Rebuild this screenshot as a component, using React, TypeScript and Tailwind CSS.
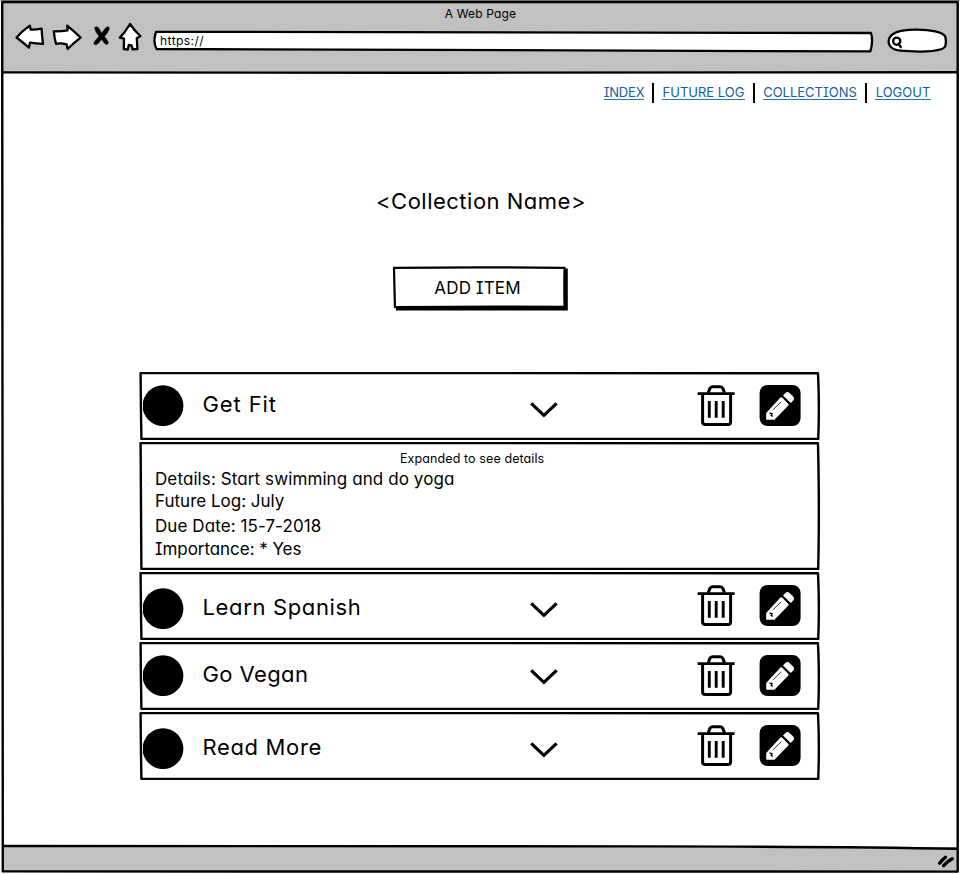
const ITEMS = [
  { title: 'Get Fit', tracking: 'tracking-[0.9px]', top: 'mt-[13px]', chevron: 'mt-[30px]', expanded: true },
  { title: 'Learn Spanish', tracking: 'tracking-[0.65px]', top: 'mt-4', chevron: 'mt-[30px]', expanded: false },
  { title: 'Go Vegan', tracking: 'tracking-[0.4px]', top: 'mt-[13px]', chevron: 'mt-[27px]', expanded: false },
  { title: 'Read More', tracking: 'tracking-[0.65px]', top: 'mt-4', chevron: 'mt-[30px]', expanded: false },
];

const DETAILS = [
  { text: 'Details: Start swimming and do yoga', style: 'h-[22px] tracking-[0.1px]' },
  { text: 'Future Log: July', style: 'h-[25px]' },
  { text: 'Due Date: 15-7-2018', style: 'h-[23px] tracking-[0.08px]' },
  { text: 'Importance: * Yes', style: 'h-6 tracking-[-0.05px]' },
];

const LINKS = [
  { label: 'INDEX', style: 'w-10 tracking-[-0.2px]' },
  { label: 'FUTURE LOG', style: 'w-[83px]' },
  { label: 'COLLECTIONS', style: 'w-[94px]' },
  { label: 'LOGOUT', style: 'w-14' },
];

function RowOutline({ height }: { height: number }) {
  const b = height - 1;
  return (
    <svg className="absolute inset-0" width="681" height={height} fill="none" stroke="#000" strokeWidth="2.4" strokeLinejoin="round">
      <path d={`M1.6 1 Q340 0.8 679 1.2 Q680.6 ${height / 2} 679.2 ${b} Q340 ${b + 0.2} 2.4 ${b - 0.2} Q1.8 ${height / 2} 1.6 1Z`} />
    </svg>
  );
}

function Trash() {
  return (
    <svg width="37" height="42" viewBox="-0.6 0 37 42" fill="none" stroke="#000" strokeWidth="3" className="overflow-visible">
      <path d="M0 8.7H37" strokeWidth="2.8" />
      <path d="M10.6 8 L12.3 3.4 Q13 1.7 15 1.7 H22.6 Q24.5 1.7 25.2 3.4 L27 8" />
      <path d="M5 8.7V37Q5 39.6 7.6 39.6H30.4Q33 39.6 33 37V8.7" />
      <path d="M11.7 16V32.7M18.6 16V32.7M25.6 16V32.7" strokeWidth="2.9" />
    </svg>
  );
}

function Pencil() {
  return (
    <svg width="41" height="41" viewBox="-0.6 0 41 41" className="overflow-visible">
      <rect width="41" height="41" rx="8" />
      <path d="M6.6 28 L20.8 12.6 Q21.6 11.8 22.4 12.6 L28.8 19 Q29.4 19.8 28.8 20.6 L14.8 34.8 H6.6Z" fill="#fff" />
      <path d="M23.4 10.6 L26.3 7.6 Q27.8 6.4 29.4 7.6 L33.8 11.8 Q35.2 13.4 34 15 L31.2 18Z" fill="#fff" />
      <path d="M13.2 25 L21.6 16.8" stroke="#000" strokeWidth="0.8" />
      <path d="M9.8 27.8 L12.4 28.6 L11.6 30.4 L13.2 31.4" fill="none" stroke="#000" strokeWidth="1.4" />
    </svg>
  );
}

function Toolbar() {
  return (
    <header className="h-[72px] bg-[#c1c1c1]">
      <div className="h-6 pl-px pt-1 text-center text-[12px] leading-5 tracking-[0.15px]">A Web Page</div>
      <div className="flex h-[30px] pl-3">
        <svg width="138" height="30" viewBox="14 24 138 30" fill="#fff" stroke="#000" strokeWidth="2.3" strokeLinejoin="round" className="overflow-visible">
          <path d="M16.5 37.5 Q22 31 29.8 25.6 L30.6 29.6 Q36 29.8 41.6 28.6 Q42 36 43 43.8 Q36 43.4 30 42.6 L29 47.6 Q23 42.4 16.5 37.5Z" />
          <path d="M53.8 31.4 Q61 31.6 67.6 30.4 L67.2 25.6 Q74 31 80.6 37.6 Q74 42.6 67.6 49 L66.6 44.4 Q61 42.6 56 43.8 Q54.4 38 53.8 31.4Z" />
          <path d="M130 24 Q134.6 31 140.4 36 L136.8 38.2 L137.4 49 L132.6 49.4 L131.6 45.4 L128.8 45 L127.8 49.6 L123.8 49 L124 38.6 L119.9 37.6 Q125.6 31.6 130 24Z" />
          <path d="M94.6 27.6 Q97.4 25 99.6 29.6 L101.8 33.2 Q104.4 28.6 107 26.8 Q109.6 26 109.2 29.2 Q107.4 33.6 104.4 36.4 Q108 40.6 108.4 43 Q107.4 45.6 105 43.8 L101.4 39.4 Q98.4 44 95.6 44.8 Q92.8 44.4 94.6 41.4 L99 36.2 Q95 31.6 94.6 27.6Z" fill="#000" stroke="#000" strokeWidth="0.5" />
        </svg>
        <div className="relative ml-px mt-[7px] h-5 w-[720px]">
          <svg className="absolute inset-0 overflow-visible" width="720" height="20" viewBox="153 31 720 20" fill="#fff" stroke="#000" strokeWidth="2.3" strokeLinejoin="round">
            <path d="M156 31.8 Q500 31.4 871 33 Q873.4 41 870.4 51.4 Q500 51 156.6 49 Q152.6 42 156 31.8Z" />
          </svg>
          <div className="relative pl-[7px] text-[12px] leading-5 tracking-[0.45px]">https://</div>
        </div>
        <svg className="ml-[14px] mt-1 overflow-visible" width="60" height="25" viewBox="887 28 60 25" fill="#fff" stroke="#000" strokeWidth="2.3" strokeLinecap="round">
          <path d="M888.6 41.5 C888.5 33 900 29.6 915 29.6 C930 29.4 944 32 945.4 37 C946.8 44 945.6 47.8 942 49 C932 52 918 52 905 50.8 C894 51 888.8 47 888.6 41.5Z" />
          <circle cx="896.7" cy="41.2" r="3.6" />
          <path d="M898.4 43.6 L900.8 47" />
        </svg>
      </div>
    </header>
  );
}

export default function App() {
  return (
    <div className="relative flex h-[874px] w-[960px] flex-col overflow-hidden bg-white px-0.5 pb-0.5 font-['Inter',sans-serif] text-black [font-feature-settings:'cv11','cv08']">
      <Toolbar />
      <main className="flex grow flex-col">
        <nav className="mt-[9px] flex h-6 items-center self-end pr-[27px] text-[13px] leading-[13px] text-[#15609f]">
          {LINKS.map((link, i) => (
            <div key={link.label} className="flex items-center">
              {i > 0 && <span className="mx-2 h-5 w-0.5 bg-black" />}
              <a className={`${link.style} flex justify-center whitespace-nowrap border-b border-[#2f74b0]`}>{link.label}</a>
            </div>
          ))}
        </nav>
        <h1 className="mt-[80px] h-8 pl-0.5 text-center text-[22px] leading-8 tracking-[0.5px]">&lt;Collection Name&gt;</h1>
        <button className="relative ml-[390px] mt-[49px] h-11 w-[177px] pr-[6px] text-[17px] leading-6 tracking-[0.15px]">
          <svg className="absolute inset-0 overflow-visible" width="177" height="44" viewBox="392 266 177 44">
            <path d="M396 270 L567.8 268.6 V310.4 H396Z" />
            <path d="M394 267.8 Q480 267 564.6 267.8 Q564 288 564.6 306.8 Q480 306.2 395 307.2 Q394.4 288 394 267.8Z" fill="#fff" stroke="#000" strokeWidth="2.2" strokeLinejoin="round" />
          </svg>
          <span className="relative">ADD ITEM</span>
        </button>
        <section className="ml-[137px] mt-[62px] flex w-[681px] flex-col gap-0.5">
          {ITEMS.map((item) => (
            <div key={item.title} className="flex flex-col gap-0.5">
              <div className="relative flex h-[68px]">
                <RowOutline height={68} />
                <div className={`${item.top} ml-[3.5px] flex w-[387.5px]`}>
                  <svg width="41" height="41" viewBox="0 0 41 41">
                    <circle cx="20" cy="20.7" r="20.4" />
                  </svg>
                  <span className={`${item.tracking} ml-[19px] text-[22px] leading-[38px]`}>{item.title}</span>
                </div>
                <svg className={item.chevron} width="28" height="18" fill="none" stroke="#000" strokeWidth="3.2">
                  <path d="M1.2 1.4 L13.9 13.4 L26.6 1.4" />
                </svg>
                <div className="ml-[139px] mt-[13px] flex gap-[25px]">
                  <Trash />
                  <Pencil />
                </div>
              </div>
              {item.expanded && (
                <div className="relative h-32 pl-4 pt-2">
                  <RowOutline height={128} />
                  <p className="relative ml-[245px] h-[18px] text-[12.5px] leading-[18px] tracking-[0.1px]">Expanded to see details</p>
                  {DETAILS.map((line) => (
                    <p key={line.text} className={`${line.style} relative text-[17px] leading-[23px]`}>{line.text}</p>
                  ))}
                </div>
              )}
            </div>
          ))}
        </section>
      </main>
      <footer className="flex h-[25px] justify-end bg-[#c1c1c1] pr-1">
        <svg width="16" height="25" viewBox="938 847 16 25" stroke="#000" strokeWidth="3.4" strokeLinecap="round" className="overflow-visible">
          <path d="M939.6 863.2 Q942 860 945.4 857.2M943.6 865.6 Q947.4 861.4 952.2 858.8" fill="none" />
        </svg>
      </footer>
      <svg className="pointer-events-none absolute inset-0" width="960" height="874" fill="none" stroke="#000" strokeWidth="2.4" strokeLinejoin="round">
        <path d="M0 0.4H960" stroke="#777d77" strokeWidth="0.8" />
        <path d="M2.2 2 H957.7 Q957 430 957.7 871.6 Q480 869.6 2.8 871.4 Q2 430 2.2 2Z" />
        <path d="M2.5 72.4 Q480 73.2 957.5 72.2" />
        <path d="M2.5 846 Q300 847.4 650 846.4 Q850 846.6 957.5 848.8" />
      </svg>
    </div>
  );
}
